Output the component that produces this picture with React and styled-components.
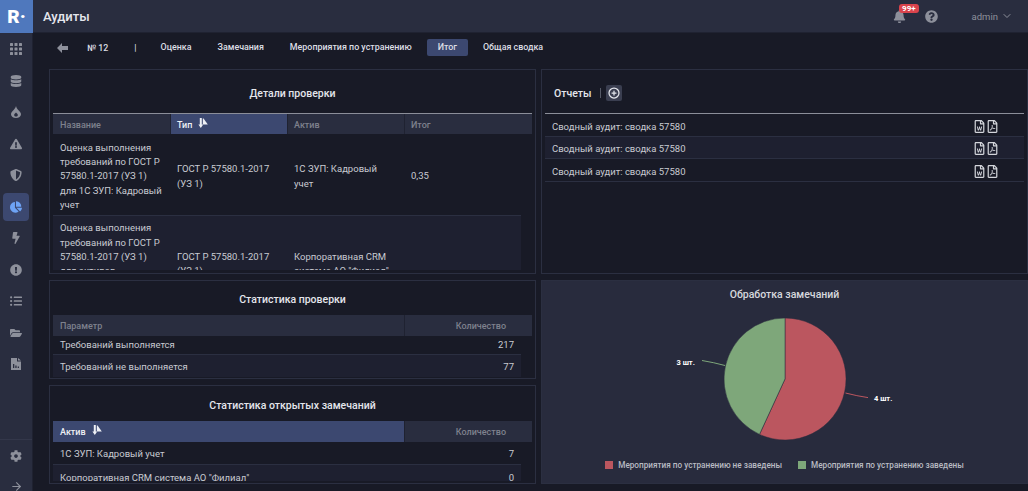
import styled, { createGlobalStyle } from "styled-components";
import {
  FaDatabase, FaExclamationTriangle, FaShieldAlt, FaChartPie, FaBolt,
  FaExclamationCircle, FaListUl, FaFolderOpen, FaCog, FaBell,
  FaQuestionCircle, FaRegFileWord, FaRegFilePdf,
} from "react-icons/fa";
import { FiArrowRight, FiChevronDown, FiPlusCircle } from "react-icons/fi";

const GlobalStyle = createGlobalStyle`
  html, body { margin: 0; padding: 0; height: 100%; overflow: hidden; }
  body { background: #181a26; font-family: Roboto, "Liberation Sans", sans-serif; }
`;

const Shell = styled.div`
  display: grid;
  grid-template-columns: 33px 1fr;
  grid-template-rows: 33px 1fr;
  width: 1028px;
  height: 491px;
  overflow: hidden;
`;

const Logo = styled.div`
  background: #4f78bd;
  color: #fff;
  font-size: 19px;
  font-weight: 900;
  display: flex;
  align-items: center;
  justify-content: center;
`;

const TopBar = styled.header`
  background: #292d3f;
  border-bottom: 1px solid #1f2231;
  display: flex;
  align-items: center;
  padding: 0 15px 0 10px;
`;

const PageTitle = styled.h1`
  margin: 0;
  flex: 1;
  color: #e4e6ec;
  font-size: 13px;
  font-weight: 500;
`;

const BellWrap = styled.div`
  position: relative;
  display: flex;
  color: #8d909b;
  font-size: 13px;
  margin-right: 19px;
`;

const Badge = styled.span`
  position: absolute;
  top: -6px;
  left: 6px;
  background: #d9434c;
  color: #fff;
  border-radius: 3px;
  font-size: 8px;
  font-weight: 700;
  line-height: 9px;
  padding: 0 3.5px;
`;

const HelpIcon = styled.div`
  display: flex;
  color: #8d909b;
  font-size: 13px;
  margin-right: 34px;
`;

const User = styled.div`
  display: flex;
  align-items: center;
  gap: 3px;
  color: #8d909b;
  font-size: 9.5px;
`;

const Sidebar = styled.nav`
  background: #292d3f;
  display: flex;
  flex-direction: column;
  align-items: center;
  padding-top: 2px;
  border-right: 1px solid #1f2231;
  height: 458px;
  overflow: hidden;
  box-sizing: border-box;
`;

const SideItem = styled.div`
  width: 26px;
  height: 28px;
  margin-bottom: 3.5px;
  flex-shrink: 0;
  border-radius: 4px;
  display: flex;
  align-items: center;
  justify-content: center;
  font-size: 12px;
  color: ${p => (p.$active ? "#6ea3f5" : "#8d909b")};
  background: ${p => (p.$active ? "#3c4870" : "transparent")};
`;

const SideBottom = styled.div`
  margin-top: auto;
  width: 100%;
  height: 52px;
  flex-shrink: 0;
  box-sizing: border-box;
  overflow: hidden;
  border-top: 1px solid #33374a;
  display: flex;
  flex-direction: column;
  align-items: center;
  padding-top: 2px;
  ${SideItem} { margin-bottom: 2px; }
`;

const Main = styled.main`
  display: flex;
  flex-direction: column;
  min-width: 0;
`;

const Tabs = styled.div`
  height: 29px;
  display: flex;
  align-items: center;
  gap: 26px;
  padding-left: 24px;
  color: #dcdee4;
  font-size: 8.9px;
  font-weight: 500;
  flex-shrink: 0;
`;

const BackIcon = styled.div`
  display: flex;
  color: #8d909b;
  margin-right: -7px;
`;

const Sep = styled.span`
  margin-right: -2px;
`;

const Tab = styled.div`
  height: 17px;
  line-height: 17px;
  border-radius: 2px;
  padding: ${p => (p.$active ? "0 11px" : "0")};
  margin: ${p => (p.$active ? "0 -11px" : "0")};
  background: ${p => (p.$active ? "#3c4870" : "transparent")};
`;

const Grid = styled.div`
  display: grid;
  grid-template-columns: 487px 487px;
  column-gap: 5px;
  padding: 7px 0 0 16px;
`;

const Column = styled.div`
  display: flex;
  flex-direction: column;
  gap: 6px;
`;

const Panel = styled.section`
  box-sizing: border-box;
  height: ${p => p.$h}px;
  border: 1px solid #2b2f41;
  background: #181a26;
  padding: 0 3px;
  overflow: hidden;
`;

const PanelTitle = styled.h2`
  margin: 0;
  box-sizing: border-box;
  height: ${p => p.$h}px;
  padding-top: ${p => p.$pt || 0}px;
  display: flex;
  align-items: center;
  justify-content: center;
  color: #e4e6ec;
  font-size: 10.5px;
  font-weight: 500;
`;

const HeadCell = styled.div`
  display: flex;
  align-items: center;
  gap: 6px;
  padding: ${p => (p.$right ? "0 26px 0 0" : p.$first ? "0 7px" : "0 7px 0 6px")};
  justify-content: ${p => (p.$right ? "flex-end" : "flex-start")};
  font-size: 9px;
  font-weight: 500;
  color: ${p => (p.$active ? "#eef0f5" : "#7e818d")};
  background: ${p => (p.$active ? "#3c4870" : "transparent")};
  border-left: ${p => (p.$first ? "none" : "1px solid #1f2231")};
`;

const HeadRow = styled.div`
  display: grid;
  box-sizing: border-box;
  grid-template-columns: ${p => p.$cols};
  height: 21px;
  background: #292d3f;
  border-top: ${p => (p.$line ? "1px solid #8b8e99" : "none")};
  ${HeadCell} { padding-top: ${p => (p.$line ? 1 : 0)}px; }
`;

const Body = styled.div`
  width: 468px;
  height: ${p => p.$h}px;
  overflow: hidden;
`;

const Row = styled.div`
  display: grid;
  box-sizing: border-box;
  grid-template-columns: ${p => p.$cols};
  align-items: center;
  height: ${p => p.$h}px;
  padding-top: ${p => p.$pt || 0}px;
  background: ${p => (p.$alt ? "#1e2030" : "transparent")};
  border-top: ${p => (p.$alt ? "1px solid #2b2f41" : "none")};
  color: #c9cbd2;
  font-size: 9.5px;
  line-height: 14.2px;
`;

const Cell = styled.div`
  padding: 0 7px;
  white-space: pre-line;
  text-align: ${p => (p.$right ? "right" : "left")};
`;

const ReportsHead = styled.div`
  box-sizing: border-box;
  height: 44px;
  display: flex;
  align-items: center;
  padding: 3px 0 0 9px;
  border-bottom: 1px solid #8b8e99;
  color: #e4e6ec;
  font-size: 10.5px;
  font-weight: 500;
`;

const Divider = styled.span`
  width: 1px;
  height: 10px;
  background: #555966;
  margin: 0 5px 0 9px;
`;

const AddButton = styled.div`
  width: 16px;
  height: 16px;
  border-radius: 2px;
  background: #3a3e50;
  display: flex;
  align-items: center;
  justify-content: center;
  color: #e4e6ec;
  font-size: 12px;
`;

const ReportRow = styled.div`
  height: 22.5px;
  box-sizing: border-box;
  display: flex;
  align-items: center;
  padding: 3px 25.5px 0 7px;
  border-bottom: 1px solid #2b2f41;
  background: ${p => (p.$alt ? "#1e2030" : "transparent")};
  color: #c9cbd2;
  font-size: 9.5px;
`;

const FileIcons = styled.div`
  margin-left: auto;
  display: flex;
  gap: 0;
  color: #d3d5db;
  font-size: 13px;
`;

const ChartPanel = styled.section`
  box-sizing: border-box;
  height: 204px;
  background: #282b3d;
  border: 1px solid #2b2f41;
  display: flex;
  flex-direction: column;
  align-items: center;
`;

const ChartTitle = styled.h2`
  margin: 7px 0 0;
  color: #d6d8de;
  font-size: 10.5px;
  font-weight: 500;
`;

const PieBox = styled.div`
  position: relative;
  width: 246px;
  height: 132px;
  margin-top: 12px;
`;

const PieLabel = styled.span`
  position: absolute;
  left: ${p => p.$x}px;
  top: ${p => p.$y}px;
  color: #fff;
  font-size: 7.5px;
  font-weight: 700;
`;

const Legend = styled.div`
  display: flex;
  gap: 16px;
  margin-top: 15px;
`;

const LegendItem = styled.div`
  display: flex;
  align-items: center;
  gap: 5px;
  color: #b9bbc3;
  font-size: 8.2px;
  font-weight: 500;
`;

const Swatch = styled.span`
  width: 8px;
  height: 8px;
  background: ${p => p.$color};
`;

const SortSvg = styled.svg`
  margin-top: -3px;
`;

const SortIcon = () => (
  <SortSvg width="10" height="10" viewBox="0 0 10 10" fill="currentColor">
    <path d="M1.800 0h2v6.500h1.400L2.800 10 .4 6.500h1.400z" />
    <path d="M4.800 .5h.8L9.800 6.500h-5z" />
  </SortSvg>
);

const ArrowIcon = () => (
  <svg width="11" height="10" viewBox="0 0 11 10" fill="currentColor">
    <path d="M0 5 5 0v3h6v4H5v3z" />
  </svg>
);

const GridIcon = () => (
  <svg width="12" height="12" viewBox="0 0 12 12" fill="currentColor">
    {[0, 4.500, 9].flatMap(y => [0, 4.500, 9].map(x => (
      <rect key={`${x}-${y}`} x={x} y={y} width="3" height="3" rx="0.6" />
    )))}
  </svg>
);

const DropIcon = () => (
  <svg width="10" height="12" viewBox="0 0 10 12" fill="currentColor">
    <path fillRule="evenodd" d="M5 0c.5 2 1 2.500 2.500 4.300C8.800 5.800 10 6.800 10 8.200 10 10.400 7.800 12 5 12S0 10.400 0 8.200c0-1.700 1.500-2.900 2.400-4C3.600 2.800 4.600 1.800 5 0zm0 6.500C4 7.500 3.200 8 3.200 9S4 10.500 5 10.500 6.800 10 6.800 9 6 7.500 5 6.500z" />
  </svg>
);

const ReportIcon = () => (
  <svg width="10" height="12" viewBox="0 0 10 12" fill="currentColor">
    <path fillRule="evenodd" d="M0 0h6v3.500h4V12H0zM7 0l3 2.500H7zM2 6v4h1.300V6zM4.300 7.500V10h1.300V7.500zM6.700 8.500V10H8V8.500z" />
  </svg>
);

const sideIcons = [GridIcon, FaDatabase, DropIcon, FaExclamationTriangle, FaShieldAlt, FaChartPie, FaBolt, FaExclamationCircle, FaListUl, FaFolderOpen, ReportIcon];

const detailCols = "117px 117px 117px 1fr";
const statCols = "351px 1fr";

export default function App() {
  return (
    <Shell>
      <GlobalStyle />
      <Logo>R·</Logo>
      <TopBar>
        <PageTitle>Аудиты</PageTitle>
        <BellWrap><FaBell /><Badge>99+</Badge></BellWrap>
        <HelpIcon><FaQuestionCircle /></HelpIcon>
        <User>admin <FiChevronDown size={12} /></User>
      </TopBar>
      <Sidebar>
        {sideIcons.map((Icon, i) => (
          <SideItem key={i} $active={i === 5}><Icon /></SideItem>
        ))}
        <SideBottom>
          <SideItem><FaCog /></SideItem>
          <SideItem><FiArrowRight size={13} /></SideItem>
        </SideBottom>
      </Sidebar>
      <Main>
        <Tabs>
          <BackIcon><ArrowIcon /></BackIcon>
          <span>№ 12</span>
          <Sep>|</Sep>
          <Tab>Оценка</Tab>
          <Tab>Замечания</Tab>
          <Tab>Мероприятия по устранению</Tab>
          <Tab $active>Итог</Tab>
          <Tab>Общая сводка</Tab>
        </Tabs>
        <Grid>
          <Column>
            <Panel $h={205}>
              <PanelTitle $h={43} $pt={3}>Детали проверки</PanelTitle>
              <HeadRow $cols={detailCols} $line>
                <HeadCell $first>Название</HeadCell>
                <HeadCell $active>Тип <SortIcon /></HeadCell>
                <HeadCell>Актив</HeadCell>
                <HeadCell>Итог</HeadCell>
              </HeadRow>
              <Body $h={136}>
                <Row $cols={detailCols} $h={81} $pt={4}>
                  <Cell>{"Оценка выполнения\nтребований по ГОСТ Р\n57580.1-2017 (УЗ 1)\nдля 1С ЗУП: Кадровый\nучет"}</Cell>
                  <Cell>{"ГОСТ Р 57580.1-2017\n(УЗ 1)"}</Cell>
                  <Cell>{"1С ЗУП: Кадровый\nучет"}</Cell>
                  <Cell>0,35</Cell>
                </Row>
                <Row $cols={detailCols} $h={97} $alt>
                  <Cell>{"Оценка выполнения\nтребований по ГОСТ Р\n57580.1-2017 (УЗ 1)\nдля активов\nКорпоративная CRM\nсистема АО \"Филиал\""}</Cell>
                  <Cell>{"ГОСТ Р 57580.1-2017\n(УЗ 1)"}</Cell>
                  <Cell>{"Корпоративная CRM\nсистема АО \"Филиал\""}</Cell>
                  <Cell />
                </Row>
              </Body>
            </Panel>
            <Panel $h={99}>
              <PanelTitle $h={34} $pt={3}>Статистика проверки</PanelTitle>
              <HeadRow $cols={statCols}>
                <HeadCell $first>Параметр</HeadCell>
                <HeadCell $right>Количество</HeadCell>
              </HeadRow>
              <Body $h={41}>
                <Row $cols={statCols} $h={18}>
                  <Cell>Требований выполняется</Cell>
                  <Cell $right>217</Cell>
                </Row>
                <Row $cols={statCols} $h={26} $alt>
                  <Cell>Требований не выполняется</Cell>
                  <Cell $right>77</Cell>
                </Row>
              </Body>
            </Panel>
            <Panel $h={99}>
              <PanelTitle $h={35} $pt={4}>Статистика открытых замечаний</PanelTitle>
              <HeadRow $cols={statCols}>
                <HeadCell $first $active>Актив <SortIcon /></HeadCell>
                <HeadCell $right>Количество</HeadCell>
              </HeadRow>
              <Body $h={39}>
                <Row $cols={statCols} $h={22} $pt={3}>
                  <Cell>1С ЗУП: Кадровый учет</Cell>
                  <Cell $right>7</Cell>
                </Row>
                <Row $cols={statCols} $h={28} $alt>
                  <Cell>Корпоративная CRM система АО "Филиал"</Cell>
                  <Cell $right>0</Cell>
                </Row>
              </Body>
            </Panel>
          </Column>
          <Column>
            <Panel $h={205}>
              <ReportsHead>
                Отчеты
                <Divider />
                <AddButton><FiPlusCircle strokeWidth={2.5} /></AddButton>
              </ReportsHead>
              {[0, 1, 2].map(i => (
                <ReportRow key={i} $alt={i === 1}>
                  Сводный аудит: сводка 57580
                  <FileIcons><FaRegFileWord /><FaRegFilePdf /></FileIcons>
                </ReportRow>
              ))}
            </Panel>
            <ChartPanel>
              <ChartTitle>Обработка замечаний</ChartTitle>
              <PieBox>
                <svg width="246" height="132" viewBox="0 0 246 132">
                  <path d="M123 66 L123 5 A61 61 0 1 1 97.500 121.400 Z" fill="#bb565f" stroke="#282b3d" strokeWidth="0.5" />
                  <path d="M123 66 L97.500 121.400 A61 61 0 0 1 123 5 Z" fill="#7ea77a" stroke="#282b3d" strokeWidth="0.5" />
                  <path d="M183.500 80 Q195 83 206 84.600" fill="none" stroke="#bb565f" />
                  <path d="M63 52.500 Q52 49.500 40 47.500" fill="none" stroke="#7ea77a" />
                </svg>
                <PieLabel $x={15} $y={45}>3 шт.</PieLabel>
                <PieLabel $x={212.5} $y={81}>4 шт.</PieLabel>
              </PieBox>
              <Legend>
                <LegendItem><Swatch $color="#bb565f" />Мероприятия по устранению не заведены</LegendItem>
                <LegendItem><Swatch $color="#7ea77a" />Мероприятия по устранению заведены</LegendItem>
              </Legend>
            </ChartPanel>
          </Column>
        </Grid>
      </Main>
    </Shell>
  );
}
